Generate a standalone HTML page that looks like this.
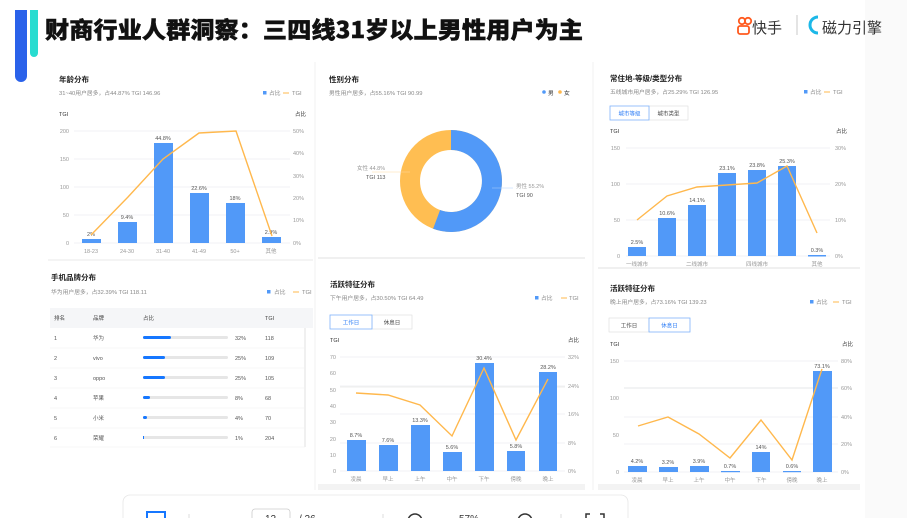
<!DOCTYPE html>
<html><head><meta charset="utf-8"><style>
html,body{margin:0;padding:0;background:#fff;width:907px;height:518px;overflow:hidden}
svg{display:block;font-family:"Liberation Sans","Noto Sans CJK SC",sans-serif}
.t{font-size:7.5px;font-weight:bold;fill:#222}
.s{font-size:5.8px;fill:#888}
.a{font-size:5.5px;fill:#999}
.d{font-size:5.5px;fill:#555}
.g{stroke:#eceef1;stroke-width:0.7}
.b{fill:#5199f8}
.l{fill:none;stroke:#ffb84d;stroke-width:1.4}
</style></head><body>
<svg width="907" height="518" viewBox="0 0 907 518">
<rect x="865" y="0" width="42" height="518" fill="#fafafa"/>
<!-- header bars -->
<rect x="15" y="10" width="12" height="72" rx="6" fill="#2a62ea"/>
<rect x="15" y="10" width="12" height="8" fill="#2a62ea"/>
<rect x="30" y="10" width="8" height="47" rx="4" fill="#28dcd0"/>
<rect x="30" y="10" width="8" height="8" fill="#28dcd0"/>
<text x="45" y="38" textLength="538" lengthAdjust="spacingAndGlyphs" style="font-size:23px;font-weight:900;fill:#111;font-family:'Noto Sans CJK SC',sans-serif;stroke:#111;stroke-width:0.4">财商行业人群洞察：三四线31岁以上男性用户为主</text>
<!-- logos -->
<circle cx="742" cy="21" r="3.2" fill="none" stroke="#ff5a1f" stroke-width="1.8"/>
<circle cx="748" cy="21" r="3.2" fill="none" stroke="#ff5a1f" stroke-width="1.8"/>
<rect x="738" y="26" width="11" height="8" rx="2" fill="none" stroke="#ff5a1f" stroke-width="1.8"/>
<text x="752" y="33" style="font-size:15px;fill:#333;font-family:'Noto Sans CJK SC',sans-serif">快手</text>
<line x1="797" y1="15" x2="797" y2="35" stroke="#bbb" stroke-width="0.8"/>
<path d="M818 17 A8 8 0 1 0 818 33" fill="none" stroke="#1cb8e8" stroke-width="3"/>
<text x="822" y="33" style="font-size:15px;fill:#333;font-family:'Noto Sans CJK SC',sans-serif">磁力引擎</text>
<!-- separators -->
<line x1="315" y1="62" x2="315" y2="490" stroke="#f0f0f0"/>
<line x1="593" y1="62" x2="593" y2="490" stroke="#f0f0f0"/>
<line x1="318" y1="258" x2="585" y2="258" stroke="#f0f0f0" stroke-width="2"/>
<line x1="598" y1="268" x2="860" y2="268" stroke="#f0f0f0" stroke-width="2"/>
<line x1="48" y1="260" x2="313" y2="260" stroke="#f4f4f4" stroke-width="2"/>
<rect x="318" y="484" width="267" height="6" fill="#f3f3f3"/>
<rect x="598" y="484" width="262" height="6" fill="#f3f3f3"/>

<!-- Panel 1 age -->
<text x="59" y="82" class="t">年龄分布</text>
<text x="59" y="95" class="s">31~40用户居多，占44.87% TGI 146.96</text>
<rect x="263" y="91" width="3.5" height="3.5" fill="#5199f8"/><text x="269" y="95" class="s">占比</text>
<line x1="283" y1="93" x2="289" y2="93" stroke="#ffb84d"/><text x="292" y="95" class="s">TGI</text>
<text x="59" y="116" class="a" style="fill:#333">TGI</text><text x="295" y="116" class="a" style="fill:#333">占比</text>
<g class="g"><line x1="74" y1="131" x2="290" y2="131"/><line x1="74" y1="159" x2="290" y2="159"/><line x1="74" y1="187" x2="290" y2="187"/><line x1="74" y1="215" x2="290" y2="215"/><line x1="74" y1="243" x2="290" y2="243"/></g>
<g class="a" text-anchor="end"><text x="69" y="133">200</text><text x="69" y="161">150</text><text x="69" y="189">100</text><text x="69" y="217">50</text><text x="69" y="245">0</text></g>
<g class="a"><text x="293" y="133">50%</text><text x="293" y="155">40%</text><text x="293" y="178">30%</text><text x="293" y="200">20%</text><text x="293" y="222">10%</text><text x="293" y="245">0%</text></g>
<g class="b"><rect x="82" y="239" width="19" height="4"/><rect x="118" y="222" width="19" height="21"/><rect x="154" y="143" width="19" height="100"/><rect x="190" y="193" width="19" height="50"/><rect x="226" y="203" width="19" height="40"/><rect x="262" y="237" width="19" height="6"/></g>
<g class="d" text-anchor="middle"><text x="91" y="236">2%</text><text x="127" y="219">9.4%</text><text x="163" y="140">44.8%</text><text x="199" y="190">22.6%</text><text x="235" y="200">18%</text><text x="271" y="234">2.9%</text></g>
<polyline class="l" points="91,235 128,197 163,159 199,133 236,131 272,236"/>
<g class="a" text-anchor="middle"><text x="91" y="253">18-23</text><text x="127" y="253">24-30</text><text x="163" y="253">31-40</text><text x="199" y="253">41-49</text><text x="235" y="253">50+</text><text x="271" y="253">其他</text></g>

<!-- Panel 2 gender -->
<text x="329" y="82" class="t">性别分布</text>
<text x="329" y="95" class="s">男性用户居多，占55.16% TGI 90.99</text>
<circle cx="544" cy="92" r="1.8" fill="#5199f8"/><text x="548" y="95" class="s" style="fill:#333">男</text>
<circle cx="560" cy="92" r="1.8" fill="#ffb84d"/><text x="564" y="95" class="s" style="fill:#333">女</text>
<circle cx="451" cy="181" r="41" fill="none" stroke="#ffbe52" stroke-width="20"/>
<path d="M451 140 A41 41 0 1 1 436.6 219.4" fill="none" stroke="#5199f8" stroke-width="20"/>
<line x1="372" y1="172" x2="410" y2="172" stroke="#ffd9a0" stroke-width="0.5"/>
<line x1="492" y1="188" x2="513" y2="188" stroke="#b0d0fb" stroke-width="0.5"/>
<text x="357" y="170" class="a">女性 44.8%</text><text x="366" y="179" class="d">TGI 113</text>
<text x="516" y="188" class="a">男性 55.2%</text><text x="516" y="197" class="d">TGI 90</text>

<!-- Panel 3 city -->
<text x="610" y="81" class="t">常住地-等级/类型分布</text>
<text x="610" y="94" class="s">五线城市用户居多，占25.29% TGI 126.95</text>
<rect x="804" y="90" width="3.5" height="3.5" fill="#5199f8"/><text x="810" y="94" class="s">占比</text>
<line x1="824" y1="92" x2="830" y2="92" stroke="#ffb84d"/><text x="833" y="94" class="s">TGI</text>
<rect x="649" y="106" width="39" height="14" fill="#fff" stroke="#ddd" stroke-width="0.6"/>
<rect x="610" y="106" width="39" height="14" fill="#fff" stroke="#7fb3fb" stroke-width="0.8"/>
<text x="629.5" y="115.5" class="a" text-anchor="middle" style="fill:#2b7cf6">城市等级</text>
<text x="668.5" y="115.5" class="a" text-anchor="middle" style="fill:#444">城市类型</text>
<text x="610" y="133" class="a" style="fill:#333">TGI</text><text x="836" y="133" class="a" style="fill:#333">占比</text>
<g class="g"><line x1="626" y1="148" x2="830" y2="148"/><line x1="626" y1="184" x2="830" y2="184"/><line x1="626" y1="220" x2="830" y2="220"/><line x1="626" y1="256" x2="830" y2="256"/></g>
<g class="a" text-anchor="end"><text x="620" y="150">150</text><text x="620" y="186">100</text><text x="620" y="222">50</text><text x="620" y="258">0</text></g>
<g class="a"><text x="835" y="150">30%</text><text x="835" y="186">20%</text><text x="835" y="222">10%</text><text x="835" y="258">0%</text></g>
<g class="b"><rect x="628" y="247" width="18" height="9"/><rect x="658" y="218" width="18" height="38"/><rect x="688" y="205" width="18" height="51"/><rect x="718" y="173" width="18" height="83"/><rect x="748" y="170" width="18" height="86"/><rect x="778" y="166" width="18" height="90"/><rect x="808" y="255" width="18" height="1.5"/></g>
<g class="d" text-anchor="middle"><text x="637" y="244">2.5%</text><text x="667" y="215">10.6%</text><text x="697" y="202">14.1%</text><text x="727" y="170">23.1%</text><text x="757" y="167">23.8%</text><text x="787" y="163">25.3%</text><text x="817" y="252">0.3%</text></g>
<polyline class="l" points="637,220 667,196 697,187 727,185 757,183 787,166 817,233"/>
<g class="a" text-anchor="middle"><text x="637" y="266">一线城市</text><text x="697" y="266">二线城市</text><text x="757" y="266">四线城市</text><text x="817" y="266">其他</text></g>

<!-- Panel 4 phone -->
<text x="51" y="280" class="t">手机品牌分布</text>
<text x="51" y="294" class="s">华为用户居多，占32.39% TGI 118.11</text>
<rect x="267" y="290" width="3.5" height="3.5" fill="#5199f8"/><text x="274" y="294" class="s">占比</text>
<line x1="293" y1="292" x2="299" y2="292" stroke="#ffb84d"/><text x="302" y="294" class="s">TGI</text>
<rect x="50" y="308" width="263" height="20" fill="#f5f6f8"/>
<line x1="305" y1="328" x2="305" y2="447" stroke="#f0f0f0" stroke-width="2"/>
<g class="d" style="fill:#444"><text x="54" y="320">排名</text><text x="93" y="320">品牌</text><text x="143" y="320">占比</text><text x="265" y="320">TGI</text></g>
<g stroke="#f0f0f0" stroke-width="0.6"><line x1="50" y1="348" x2="305" y2="348"/><line x1="50" y1="368" x2="305" y2="368"/><line x1="50" y1="388" x2="305" y2="388"/><line x1="50" y1="408" x2="305" y2="408"/><line x1="50" y1="428" x2="305" y2="428"/><line x1="50" y1="447" x2="305" y2="447"/></g>
<g class="d">
<text x="54" y="340">1</text><text x="93" y="340">华为</text><text x="235" y="340">32%</text><text x="265" y="340">118</text>
<text x="54" y="360">2</text><text x="93" y="360">vivo</text><text x="235" y="360">25%</text><text x="265" y="360">109</text>
<text x="54" y="380">3</text><text x="93" y="380">oppo</text><text x="235" y="380">25%</text><text x="265" y="380">105</text>
<text x="54" y="400">4</text><text x="93" y="400">苹果</text><text x="235" y="400">8%</text><text x="265" y="400">68</text>
<text x="54" y="420">5</text><text x="93" y="420">小米</text><text x="235" y="420">4%</text><text x="265" y="420">70</text>
<text x="54" y="440">6</text><text x="93" y="440">荣耀</text><text x="235" y="440">1%</text><text x="265" y="440">204</text>
</g>
<g fill="#e6e6e6"><rect x="143" y="336" width="85" height="3" rx="1.5"/><rect x="143" y="356" width="85" height="3" rx="1.5"/><rect x="143" y="376" width="85" height="3" rx="1.5"/><rect x="143" y="396" width="85" height="3" rx="1.5"/><rect x="143" y="416" width="85" height="3" rx="1.5"/><rect x="143" y="436" width="85" height="3" rx="1.5"/></g>
<g fill="#1677ff"><rect x="143" y="336" width="28" height="3" rx="1.5"/><rect x="143" y="356" width="22" height="3" rx="1.5"/><rect x="143" y="376" width="22" height="3" rx="1.5"/><rect x="143" y="396" width="7" height="3" rx="1.5"/><rect x="143" y="416" width="4" height="3" rx="1.5"/><rect x="143" y="436" width="1" height="3"/></g>

<!-- Panel 5 active workday -->
<text x="330" y="287" class="t">活跃特征分布</text>
<text x="330" y="300" class="s">下午用户居多，占30.50% TGI 64.49</text>
<rect x="535" y="296" width="3.5" height="3.5" fill="#5199f8"/><text x="541" y="300" class="s">占比</text>
<line x1="561" y1="298" x2="567" y2="298" stroke="#ffb84d"/><text x="569" y="300" class="s">TGI</text>
<rect x="372" y="315" width="40" height="14" fill="#fff" stroke="#ddd" stroke-width="0.6"/>
<rect x="330" y="315" width="42" height="14" fill="#fff" stroke="#7fb3fb" stroke-width="0.8"/>
<text x="351" y="324.5" class="a" text-anchor="middle" style="fill:#2b7cf6">工作日</text>
<text x="392" y="324.5" class="a" text-anchor="middle" style="fill:#444">休息日</text>
<text x="330" y="342" class="a" style="fill:#333">TGI</text><text x="568" y="342" class="a" style="fill:#333">占比</text>
<g class="g"><line x1="340" y1="357" x2="565" y2="357"/><line x1="340" y1="386" x2="565" y2="386"/><line x1="340" y1="414" x2="565" y2="414"/><line x1="340" y1="443" x2="565" y2="443"/><line x1="340" y1="471" x2="565" y2="471"/></g>
<line x1="340" y1="387" x2="565" y2="387" stroke="#dcdcdc" stroke-width="0.6"/>
<g class="a" text-anchor="end"><text x="336" y="359">70</text><text x="336" y="375">60</text><text x="336" y="392">50</text><text x="336" y="408">40</text><text x="336" y="424">30</text><text x="336" y="441">20</text><text x="336" y="457">10</text><text x="336" y="473">0</text></g>
<g class="a"><text x="568" y="359">32%</text><text x="568" y="388">24%</text><text x="568" y="416">16%</text><text x="568" y="445">8%</text><text x="568" y="473">0%</text></g>
<g class="b"><rect x="347" y="440" width="19" height="31"/><rect x="379" y="445" width="19" height="26"/><rect x="411" y="425" width="19" height="46"/><rect x="443" y="452" width="19" height="19"/><rect x="475" y="363" width="19" height="108"/><rect x="507" y="451" width="18" height="20"/><rect x="539" y="372" width="18" height="99"/></g>
<g class="d" text-anchor="middle"><text x="356" y="437">8.7%</text><text x="388" y="442">7.6%</text><text x="420" y="422">13.3%</text><text x="452" y="449">5.6%</text><text x="484" y="360">30.4%</text><text x="516" y="448">5.8%</text><text x="548" y="369">28.2%</text></g>
<polyline class="l" points="356,393 388,395 420,405 452,436 484,368 516,440 548,379"/>
<g class="a" text-anchor="middle"><text x="356" y="481">凌晨</text><text x="388" y="481">早上</text><text x="420" y="481">上午</text><text x="452" y="481">中午</text><text x="484" y="481">下午</text><text x="516" y="481">傍晚</text><text x="548" y="481">晚上</text></g>

<!-- Panel 6 active rest day -->
<text x="610" y="291" class="t">活跃特征分布</text>
<text x="610" y="304" class="s">晚上用户居多，占73.16% TGI 139.23</text>
<rect x="810" y="300" width="3.5" height="3.5" fill="#5199f8"/><text x="816" y="304" class="s">占比</text>
<line x1="833" y1="302" x2="839" y2="302" stroke="#ffb84d"/><text x="842" y="304" class="s">TGI</text>
<rect x="609" y="318" width="40" height="14" fill="#fff" stroke="#ddd" stroke-width="0.6"/>
<rect x="649" y="318" width="41" height="14" fill="#fff" stroke="#7fb3fb" stroke-width="0.8"/>
<text x="629" y="327.5" class="a" text-anchor="middle" style="fill:#444">工作日</text>
<text x="669.5" y="327.5" class="a" text-anchor="middle" style="fill:#2b7cf6">休息日</text>
<text x="610" y="346" class="a" style="fill:#333">TGI</text><text x="842" y="346" class="a" style="fill:#333">占比</text>
<g class="g"><line x1="624" y1="361" x2="838" y2="361"/><line x1="624" y1="388" x2="838" y2="388"/><line x1="624" y1="417" x2="838" y2="417"/><line x1="624" y1="444" x2="838" y2="444"/><line x1="624" y1="472" x2="838" y2="472"/></g>
<line x1="624" y1="388" x2="838" y2="388" stroke="#dcdcdc" stroke-width="0.6"/>
<g class="a" text-anchor="end"><text x="619" y="363">150</text><text x="619" y="400">100</text><text x="619" y="437">50</text><text x="619" y="474">0</text></g>
<g class="a"><text x="841" y="363">80%</text><text x="841" y="390">60%</text><text x="841" y="419">40%</text><text x="841" y="446">20%</text><text x="841" y="474">0%</text></g>
<g class="b"><rect x="628" y="466" width="19" height="6"/><rect x="659" y="467" width="19" height="5"/><rect x="690" y="466" width="19" height="6"/><rect x="721" y="471" width="19" height="1.2"/><rect x="752" y="452" width="18" height="20"/><rect x="783" y="471" width="18" height="1.2"/><rect x="813" y="371" width="19" height="101"/></g>
<g class="d" text-anchor="middle"><text x="637" y="463">4.2%</text><text x="668" y="464">3.2%</text><text x="699" y="463">3.9%</text><text x="730" y="468">0.7%</text><text x="761" y="449">14%</text><text x="792" y="468">0.6%</text><text x="822" y="368">73.1%</text></g>
<polyline class="l" points="638,426 668,417 699,434 730,458 761,420 792,460 822,369"/>
<g class="a" text-anchor="middle"><text x="637" y="482">凌晨</text><text x="668" y="482">早上</text><text x="699" y="482">上午</text><text x="730" y="482">中午</text><text x="761" y="482">下午</text><text x="792" y="482">傍晚</text><text x="822" y="482">晚上</text></g>

<!-- bottom toolbar -->
<rect x="123" y="495" width="505" height="30" rx="7" fill="#fff" stroke="#e6e6e6" stroke-width="0.8"/>
<rect x="147" y="512" width="18" height="10" fill="none" stroke="#1677ff" stroke-width="2"/>
<line x1="189" y1="514" x2="189" y2="518" stroke="#ddd"/>
<rect x="252" y="509" width="38" height="14" rx="3" fill="#fff" stroke="#ccc" stroke-width="0.8"/>
<text x="265" y="522" style="font-size:10px;fill:#333">12</text>
<text x="299" y="522" style="font-size:10px;fill:#333">/ 26</text>
<line x1="383" y1="514" x2="383" y2="518" stroke="#ddd"/>
<circle cx="415" cy="521" r="7" fill="none" stroke="#333" stroke-width="1.5"/>
<text x="459" y="522" style="font-size:10px;fill:#333">57%</text>
<circle cx="525" cy="521" r="7" fill="none" stroke="#333" stroke-width="1.5"/>
<line x1="561" y1="514" x2="561" y2="518" stroke="#ddd"/>
<path d="M586 518 V514 H590 M600 514 H604 V518" fill="none" stroke="#333" stroke-width="1.5"/>
</svg>
</body></html>
